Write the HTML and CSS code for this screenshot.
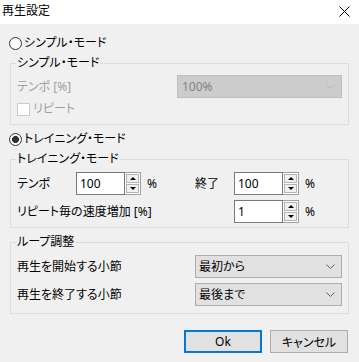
FILE: index.html
```html
<!DOCTYPE html>
<html lang="ja">
<head>
    <meta charset="UTF-8">
    <title>再生設定</title>
    <link rel="stylesheet" href="styles.css">
</head>
<body>
    <div class="titlebar">
        <span class="title">再生設定</span>
        <svg class="close" width="11" height="11" viewBox="0 0 11 11">
            <path d="M0.5 0.5L10.5 10.5M10.5 0.5L0.5 10.5" stroke="#000" stroke-width="1" fill="none"/>
        </svg>
    </div>

    <!-- シンプル・モード -->
    <div class="radio-row"><span class="radio"></span>シンプル・モード</div>
    <fieldset class="group group-simple">
        <legend>シンプル・モード</legend>
        <div class="row disabled">
            <span>テンポ [%]</span>
            <div class="select select-disabled">
                <span>100%</span>
                <svg width="9" height="5" viewBox="0 0 9 5"><path d="M0.5 0.5L4.5 4.5L8.5 0.5" stroke="#b8b8b8" fill="none"/></svg>
            </div>
        </div>
        <div class="check-row disabled"><span class="checkbox"></span>リピート</div>
    </fieldset>

    <!-- トレイニング・モード -->
    <div class="radio-row radio-row-2"><span class="radio checked"></span>トレイニング・モード</div>
    <fieldset class="group group-training">
        <legend>トレイニング・モード</legend>
        <div class="training-grid">
            <span>テンポ</span>
            <div class="spinbox">
                <span class="field">100</span>
                <span class="spin"><span class="up"></span><span class="down"></span></span>
            </div>
            <span class="unit">%</span>
            <span>終了</span>
            <div class="spinbox">
                <span class="field">100</span>
                <span class="spin"><span class="up"></span><span class="down"></span></span>
            </div>
            <span class="unit">%</span>

            <span class="wide-label">リピート毎の速度増加 [%]</span>
            <div class="spinbox">
                <span class="field">1</span>
                <span class="spin"><span class="up"></span><span class="down"></span></span>
            </div>
            <span class="unit">%</span>
        </div>
    </fieldset>

    <!-- ループ調整 -->
    <fieldset class="group group-loop">
        <legend>ループ調整</legend>
        <div class="row">
            <span>再生を開始する小節</span>
            <div class="select">
                <span>最初から</span>
                <svg width="9" height="5" viewBox="0 0 9 5"><path d="M0.5 0.5L4.5 4.5L8.5 0.5" stroke="#606060" fill="none"/></svg>
            </div>
        </div>
        <div class="row row-next">
            <span>再生を終了する小節</span>
            <div class="select">
                <span>最後まで</span>
                <svg width="9" height="5" viewBox="0 0 9 5"><path d="M0.5 0.5L4.5 4.5L8.5 0.5" stroke="#606060" fill="none"/></svg>
            </div>
        </div>
    </fieldset>

    <div class="buttons">
        <button class="btn btn-default">Ok</button>
        <button class="btn">キャンセル</button>
    </div>
</body>
</html>
```

FILE: styles.css
```css
body {
    margin: 0;
    width: 359px;
    height: 362px;
    overflow: hidden;
    background-color: #f0f0f0;
    font-family: "Noto Sans", "Noto Sans CJK JP", sans-serif;
    font-size: 12px;
    line-height: 16px;
    color: #000;
    font-feature-settings: "palt";
}
.titlebar {
    height: 24px;
    background-color: #fff;
    display: flex;
    align-items: center;
    justify-content: space-between;
    padding: 0 9px 0 2px;
}
.title {
    margin-top: -2px;
}
.close {
    margin-top: -2px;
}
.radio-row {
    display: flex;
    align-items: center;
    gap: 2px;
    height: 16px;
    margin: 11px 0 0 9px;
}
.radio-row-2 {
    margin-top: 6px;
}
.radio {
    width: 13px;
    height: 13px;
    box-sizing: border-box;
    border: 1px solid #333;
    border-radius: 50%;
    background-color: #fff;
}
.radio.checked {
    background: radial-gradient(circle, #333 3.2px, #fff 3.8px);
}
.group {
    width: 339px;
    box-sizing: border-box;
    margin: 5px 0 0 10px;
    padding: 5px 6px 7px 6px;
    border: 1px solid #dcdcdc;
    min-width: 0;
}
.group legend {
    padding: 0 1px;
    margin-left: -1px;
    line-height: 14px;
}
.group-training {
    padding-top: 6px;
    padding-bottom: 4px;
}
.group-loop {
    margin-top: 7px;
    padding-top: 6px;
}
.row {
    display: flex;
    align-items: center;
    justify-content: space-between;
    height: 23px;
}
.row-next {
    margin-top: 5px;
}
.disabled {
    color: #a0a0a0;
}
.check-row {
    display: flex;
    align-items: center;
    gap: 3px;
    height: 16px;
    margin-top: 3px;
}
.checkbox {
    width: 13px;
    height: 13px;
    box-sizing: border-box;
    border: 1px solid #cccccc;
    background-color: #fff;
}
.select {
    width: 147px;
    height: 23px;
    box-sizing: border-box;
    display: flex;
    align-items: center;
    justify-content: space-between;
    padding: 0 6px 0 3px;
    background-color: #e1e1e1;
    border: 1px solid #adadad;
}
.select-disabled {
    width: 165px;
    padding-left: 4px;
    background-color: #cccccc;
    border-color: #bfbfbf;
    color: #838383;
}
.training-grid {
    display: grid;
    grid-template-columns: 59px 65px 54px 39px 65px auto;
    grid-auto-rows: 23px;
    row-gap: 5px;
    align-items: center;
}
.wide-label {
    grid-column: 1 / 5;
}
.unit {
    padding-left: 6px;
}
.spinbox {
    display: flex;
    height: 23px;
}
.field {
    width: 49px;
    box-sizing: border-box;
    border: 1px solid #7a7a7a;
    background-color: #fff;
    padding-left: 3px;
    line-height: 21px;
}
.spin {
    width: 16px;
    box-sizing: border-box;
    border: 1px solid #a0a0a0;
    border-left: none;
    background-color: #fff;
    display: flex;
    flex-direction: column;
    gap: 1px;
    padding: 1px;
}
.spin span {
    flex: 1;
    background-color: #f0f0f0;
    border: 1px solid #b4b4b4;
    display: flex;
    align-items: center;
    justify-content: center;
}
.spin .up::after {
    content: "";
    border-left: 3px solid transparent;
    border-right: 3px solid transparent;
    border-bottom: 3px solid #000;
}
.spin .down::after {
    content: "";
    border-left: 3px solid transparent;
    border-right: 3px solid transparent;
    border-top: 3px solid #000;
}
.buttons {
    display: flex;
    justify-content: flex-end;
    gap: 8px;
    margin: 16px 11px 0 0;
}
.btn {
    width: 78px;
    height: 23px;
    box-sizing: border-box;
    font-family: inherit;
    font-size: 12px;
    font-feature-settings: "palt";
    color: #000;
    background-color: #e1e1e1;
    border: 1px solid #adadad;
    padding: 0;
}
.btn-default {
    border: 2px solid #0078d7;
}
```
